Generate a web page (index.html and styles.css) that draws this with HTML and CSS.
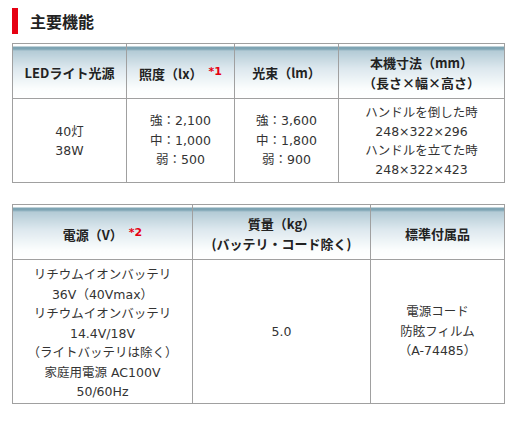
FILE: index.html
```html
<!DOCTYPE html>
<html lang="ja">
<head>
<meta charset="utf-8">
<title>主要機能</title>
<link rel="stylesheet" href="styles.css">
</head>
<body>
<div class="page">
  <h2 class="heading">主要機能</h2>

  <table class="spec spec-1">
    <colgroup>
      <col class="c1-1"><col class="c1-2"><col class="c1-3"><col class="c1-4">
    </colgroup>
    <thead>
      <tr>
        <th>LEDライト光源</th>
        <th>照度（lx）<span class="note">*1</span></th>
        <th>光束（lm）</th>
        <th>本機寸法（mm）<br>（長さ×幅×高さ）</th>
      </tr>
    </thead>
    <tbody>
      <tr>
        <td>40灯<br>38W</td>
        <td class="tall">強：2,100<br>中：1,000<br>弱：500</td>
        <td class="tall">強：3,600<br>中：1,800<br>弱：900</td>
        <td>ハンドルを倒した時<br>248×322×296<br>ハンドルを立てた時<br>248×322×423</td>
      </tr>
    </tbody>
  </table>

  <table class="spec spec-2">
    <colgroup>
      <col class="c2-1"><col class="c2-2"><col class="c2-3">
    </colgroup>
    <thead>
      <tr>
        <th>電源（V）<span class="note">*2</span></th>
        <th>質量（kg）<br>(バッテリ・コード除く)</th>
        <th>標準付属品</th>
      </tr>
    </thead>
    <tbody>
      <tr>
        <td class="tall lower">リチウムイオンバッテリ<br>36V（40Vmax）<br>リチウムイオンバッテリ<br>14.4V/18V<br>（ライトバッテリは除く）<br>家庭用電源 AC100V<br>50/60Hz</td>
        <td>5.0</td>
        <td class="tall">電源コード<br>防眩フィルム<br>（A-74485）</td>
      </tr>
    </tbody>
  </table>
</div>
</body>
</html>
```

FILE: styles.css
```css
html, body {
  margin: 0;
  padding: 0;
  background: #fff;
}

.page {
  padding: 8px 0 0 12px;
  font-family: "DejaVu Sans", "Noto Sans CJK JP", sans-serif;
  color: #333;
}

.heading {
  margin: 0 0 9px 0;
  height: 26px;
  line-height: 26px;
  padding-left: 12px;
  border-left: 6px solid #e60012;
  font-family: "Noto Sans CJK JP", sans-serif;
  font-size: 16px;
  font-weight: bold;
  color: #222;
  box-sizing: border-box;
  overflow: hidden;
}

.spec {
  border-collapse: collapse;
  table-layout: fixed;
  width: 492px;
}

.spec-1 {
  margin-bottom: 21px;
}

.spec th,
.spec td {
  border: 1px solid #a0a0a0;
  text-align: center;
  vertical-align: middle;
  padding: 0;
}

.spec th {
  height: 51px;
  font-family: "Noto Sans CJK JP", sans-serif;
  font-weight: bold;
  font-size: 13px;
  line-height: 20px;
  color: #222;
  padding-top: 3px;
  background: linear-gradient(to bottom,
    #ffffff 0px, #ffffff 2px,
    #7ea4b3 2px, #7ea4b3 5px,
    #b2cad5 6px,
    #dde8ee 24px,
    #fbfdfd 44px,
    #ffffff 100%);
}

.spec td {
  font-size: 12.5px;
  line-height: 19px;
}

.spec td.tall {
  line-height: 19.5px;
}

.spec-1 td { height: 83px; }
.spec-2 td { height: 143px; }

.spec-2 td.lower {
  padding-top: 4px;
  height: 139px;
}

.c1-1 { width: 114px; }
.c1-2 { width: 108px; }
.c1-3 { width: 104px; }
.c1-4 { width: 166px; }

.c2-1 { width: 180px; }
.c2-2 { width: 178px; }
.c2-3 { width: 134px; }

.note {
  color: #e60012;
  font-size: 11px;
  font-weight: bold;
  margin-left: 6px;
  vertical-align: 4px;
  font-family: "DejaVu Sans", sans-serif;
}
```
